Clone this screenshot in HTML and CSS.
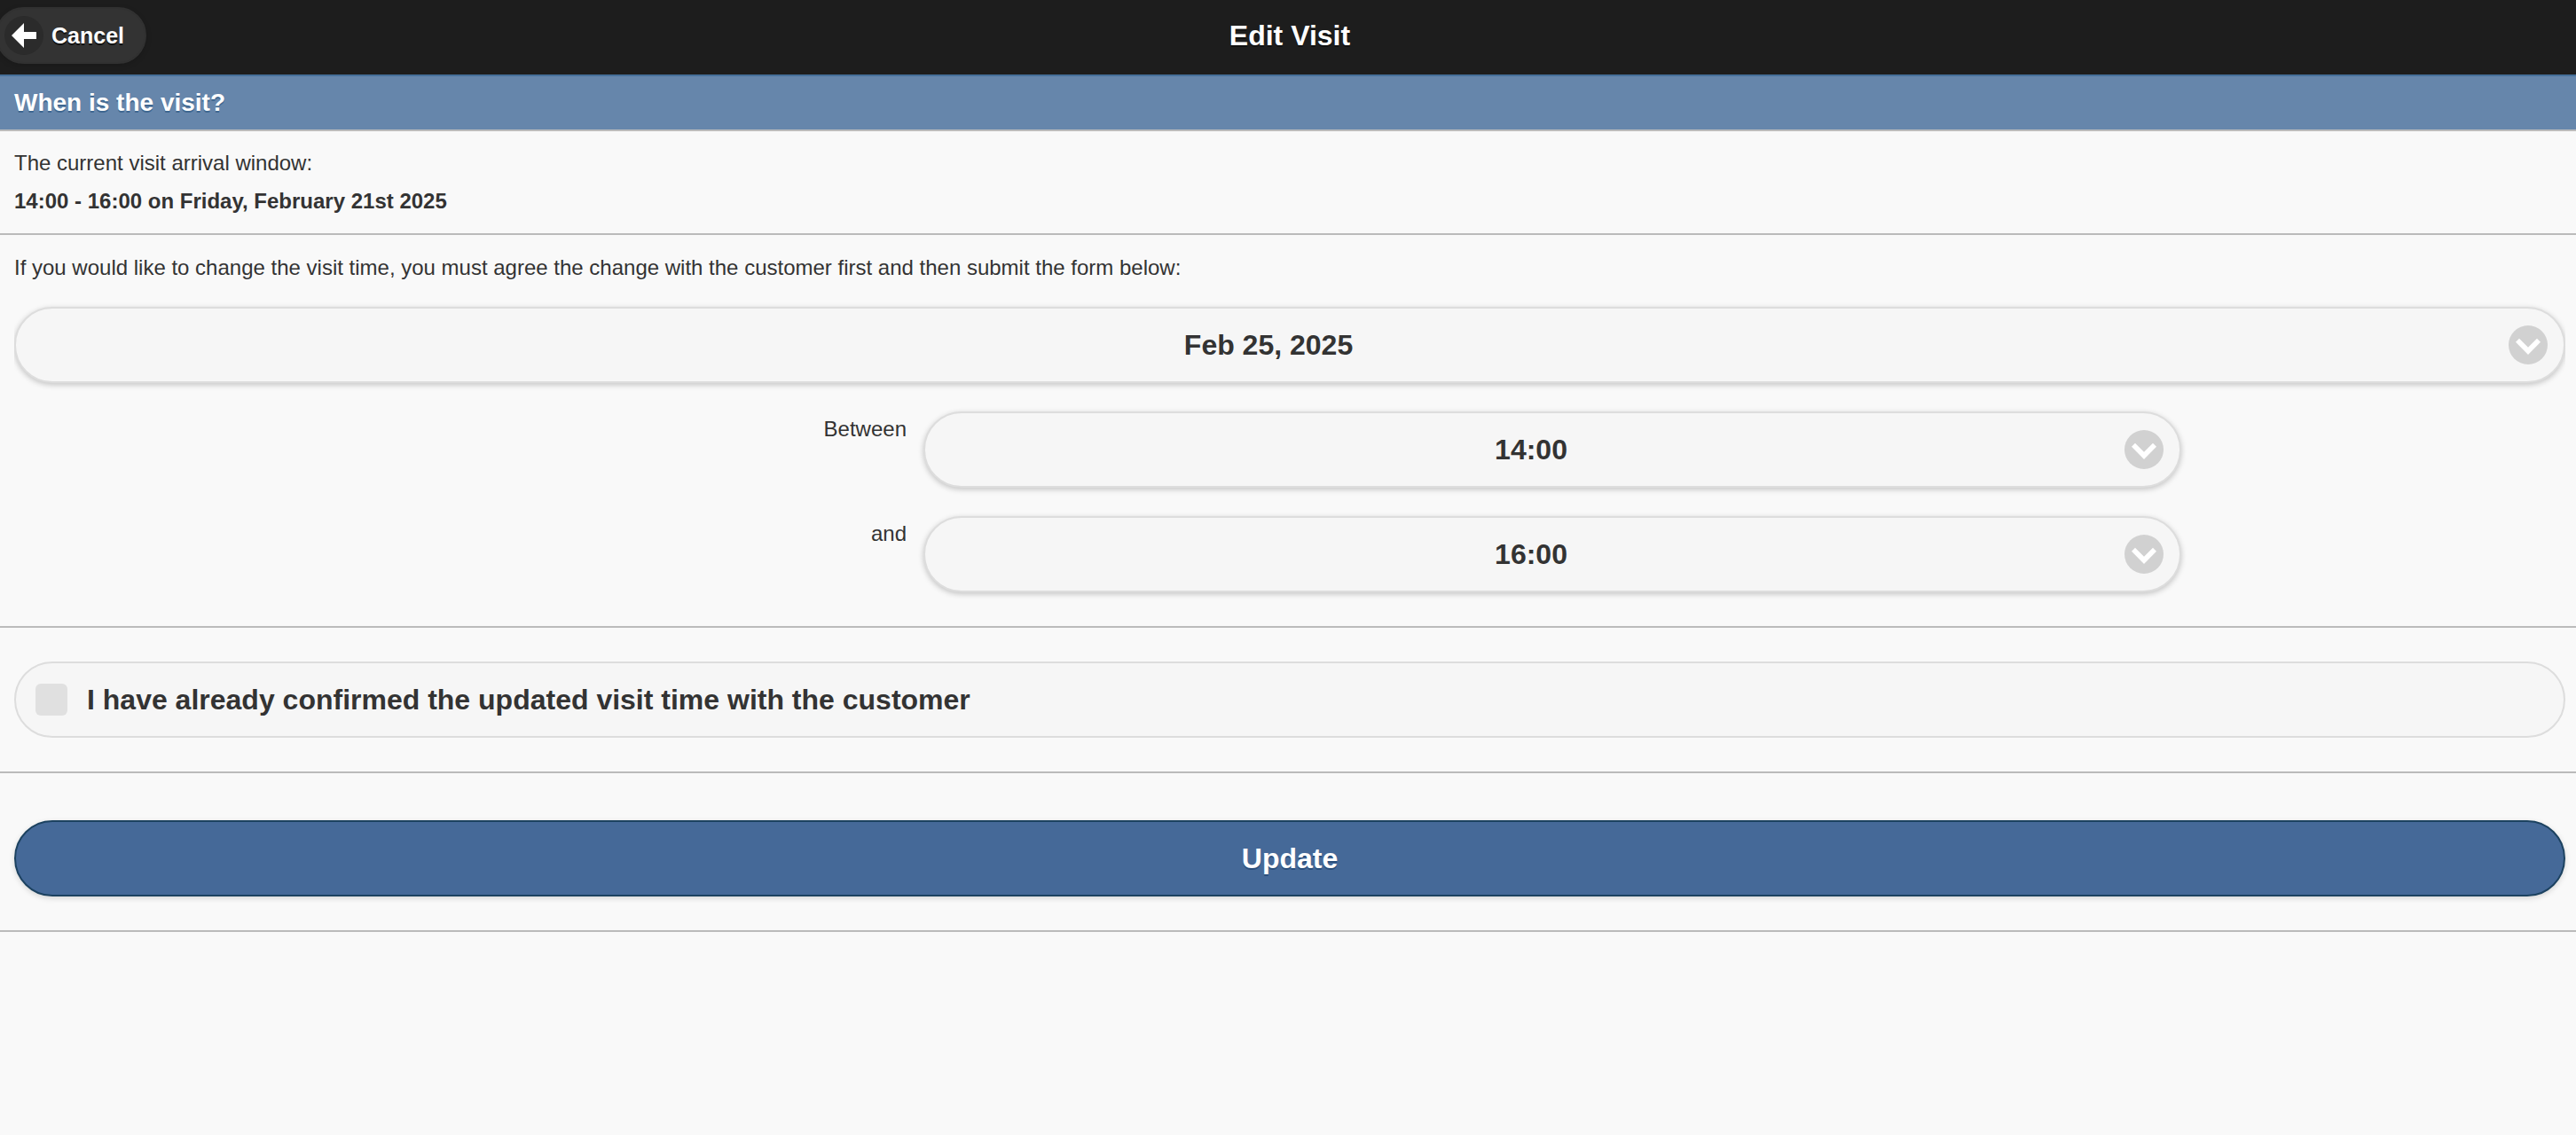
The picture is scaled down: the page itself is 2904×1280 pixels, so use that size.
FILE: index.html
```html
<!DOCTYPE html>
<html lang="en">

<head>
    <meta charset="UTF-8">
    <meta name="viewport" content="width=device-width, initial-scale=1.0">
    <title>Edit Visit</title>
    <link rel="stylesheet" href="styles.css">
</head>

<body>
    <header class="header">
        <a class="cancel-button" href="#">
            <svg class="icon icon-dark" viewBox="0 0 44 44">
                <circle cx="22" cy="22" r="22" />
                <path d="M8 22 22 8V18H36V26H22V36Z" />
            </svg>
            Cancel
        </a>
        <h1 class="title">Edit Visit</h1>
    </header>

    <h2 class="section-bar">When is the visit?</h2>

    <section class="section current">
        <p>The current visit arrival window:</p>
        <p><strong>14:00 - 16:00 on Friday, February 21st 2025</strong></p>
    </section>

    <form>
        <section class="section change">
            <p>If you would like to change the visit time, you must agree the change with the customer first and then submit the form below:</p>
            <button type="button" class="pill select date-select">
                <span class="select-text">Feb 25, 2025</span>
                <svg class="icon" viewBox="0 0 44 44">
                    <circle cx="22" cy="22" r="22" />
                    <path d="M12 14.7 22 24.8 32 14.7 36 18.7 22 33 8 18.7Z" />
                </svg>
            </button>
            <div class="field">
                <label for="from">Between</label>
                <button type="button" id="from" class="pill select">
                    <span class="select-text">14:00</span>
                    <svg class="icon" viewBox="0 0 44 44">
                        <circle cx="22" cy="22" r="22" />
                        <path d="M12 14.7 22 24.8 32 14.7 36 18.7 22 33 8 18.7Z" />
                    </svg>
                </button>
            </div>
            <div class="field">
                <label for="to">and</label>
                <button type="button" id="to" class="pill select">
                    <span class="select-text">16:00</span>
                    <svg class="icon" viewBox="0 0 44 44">
                        <circle cx="22" cy="22" r="22" />
                        <path d="M12 14.7 22 24.8 32 14.7 36 18.7 22 33 8 18.7Z" />
                    </svg>
                </button>
            </div>
        </section>

        <section class="section confirm">
            <label class="pill checkbox">
                <span class="checkbox-box"></span>
                I have already confirmed the updated visit time with the customer
            </label>
        </section>

        <section class="section submit">
            <button type="button" class="pill update-button">Update</button>
        </section>
    </form>
</body>

</html>
```
FILE: styles.css
```css
* {
    box-sizing: border-box;
}

body {
    margin: 0;
    background-color: #f9f9f9;
    color: #333;
    font-family: "Liberation Sans", Helvetica, Arial, sans-serif;
    font-size: 24px;
    line-height: 43px;
}

h1,
h2,
p {
    margin: 0;
}

/* header */
.header {
    display: grid;
    grid-template-columns: 1fr auto 1fr;
    height: 84px;
    padding: 8px 0 12px 4px;
    background-color: #1d1d1d;
    color: #fff;
    text-shadow: 0 2px 0 #111;
}

.cancel-button {
    display: flex;
    align-items: center;
    justify-self: start;
    gap: 9px;
    width: 170px;
    height: 64px;
    margin-left: -9px;
    padding-left: 8px;
    border: 2px solid #313131;
    border-radius: 32px;
    background-color: #333;
    box-shadow: 0 2px 6px rgba(0, 0, 0, 0.15);
    color: #fff;
    font-size: 25px;
    font-weight: bold;
    text-decoration: none;
}

.title {
    font-size: 32px;
    line-height: 65px;
}

.section-bar {
    height: 64px;
    padding-left: 16px;
    border-top: 2px solid #456f9a;
    border-bottom: 2px solid #bbb;
    background-color: #6686ab;
    color: #fff;
    font-size: 28px;
    line-height: 60px;
    text-shadow: 0 2px 0 #3e6790;
}

/* sections */
.section {
    padding: 38px 12px 38px 16px;
    border-bottom: 2px solid #bbb;
}

.current {
    height: 117px;
    padding-top: 14px;
    padding-bottom: 0;
}

.change {
    padding-top: 15px;
}

.submit {
    padding-top: 53px;
}

/* buttons and inputs */
.pill {
    display: flex;
    align-items: center;
    width: 100%;
    height: 86px;
    border: 2px solid #ddd;
    border-radius: 43px;
    background-color: #f6f6f6;
    color: #333;
    font-family: inherit;
    font-size: 32px;
    font-weight: bold;
}

.select {
    padding: 0 18px 0 32px;
    box-shadow: 0 2px 6px rgba(0, 0, 0, 0.22);
}

.select-text {
    flex: 1;
    padding-right: 18px;
    text-align: center;
}

/* keeps the shadow inside the left and right edge */
.date-select {
    margin-top: 23px;
    clip-path: inset(-12px 0);
}

.icon {
    flex: none;
    width: 44px;
    height: 44px;
}

.icon circle {
    fill: #d1d1d1;
}

.icon path {
    fill: #fff;
}

.icon-dark circle {
    fill: #2b2b2b;
}

.field {
    display: grid;
    grid-template-columns: 1006px 1418px;
    column-gap: 19px;
    margin-top: 32px;
}

.field label {
    line-height: 40px;
    text-align: right;
}

.checkbox {
    gap: 22px;
    padding-left: 22px;
}

.checkbox-box {
    width: 36px;
    height: 36px;
    border-radius: 6px;
    background-color: #e0e0e0;
}

.update-button {
    justify-content: center;
    border-color: #1c4260;
    background-color: #456998;
    box-shadow: 0 2px 6px rgba(0, 0, 0, 0.15);
    color: #fff;
    text-shadow: 0 2px 0 #2a4f7c;
}
```
